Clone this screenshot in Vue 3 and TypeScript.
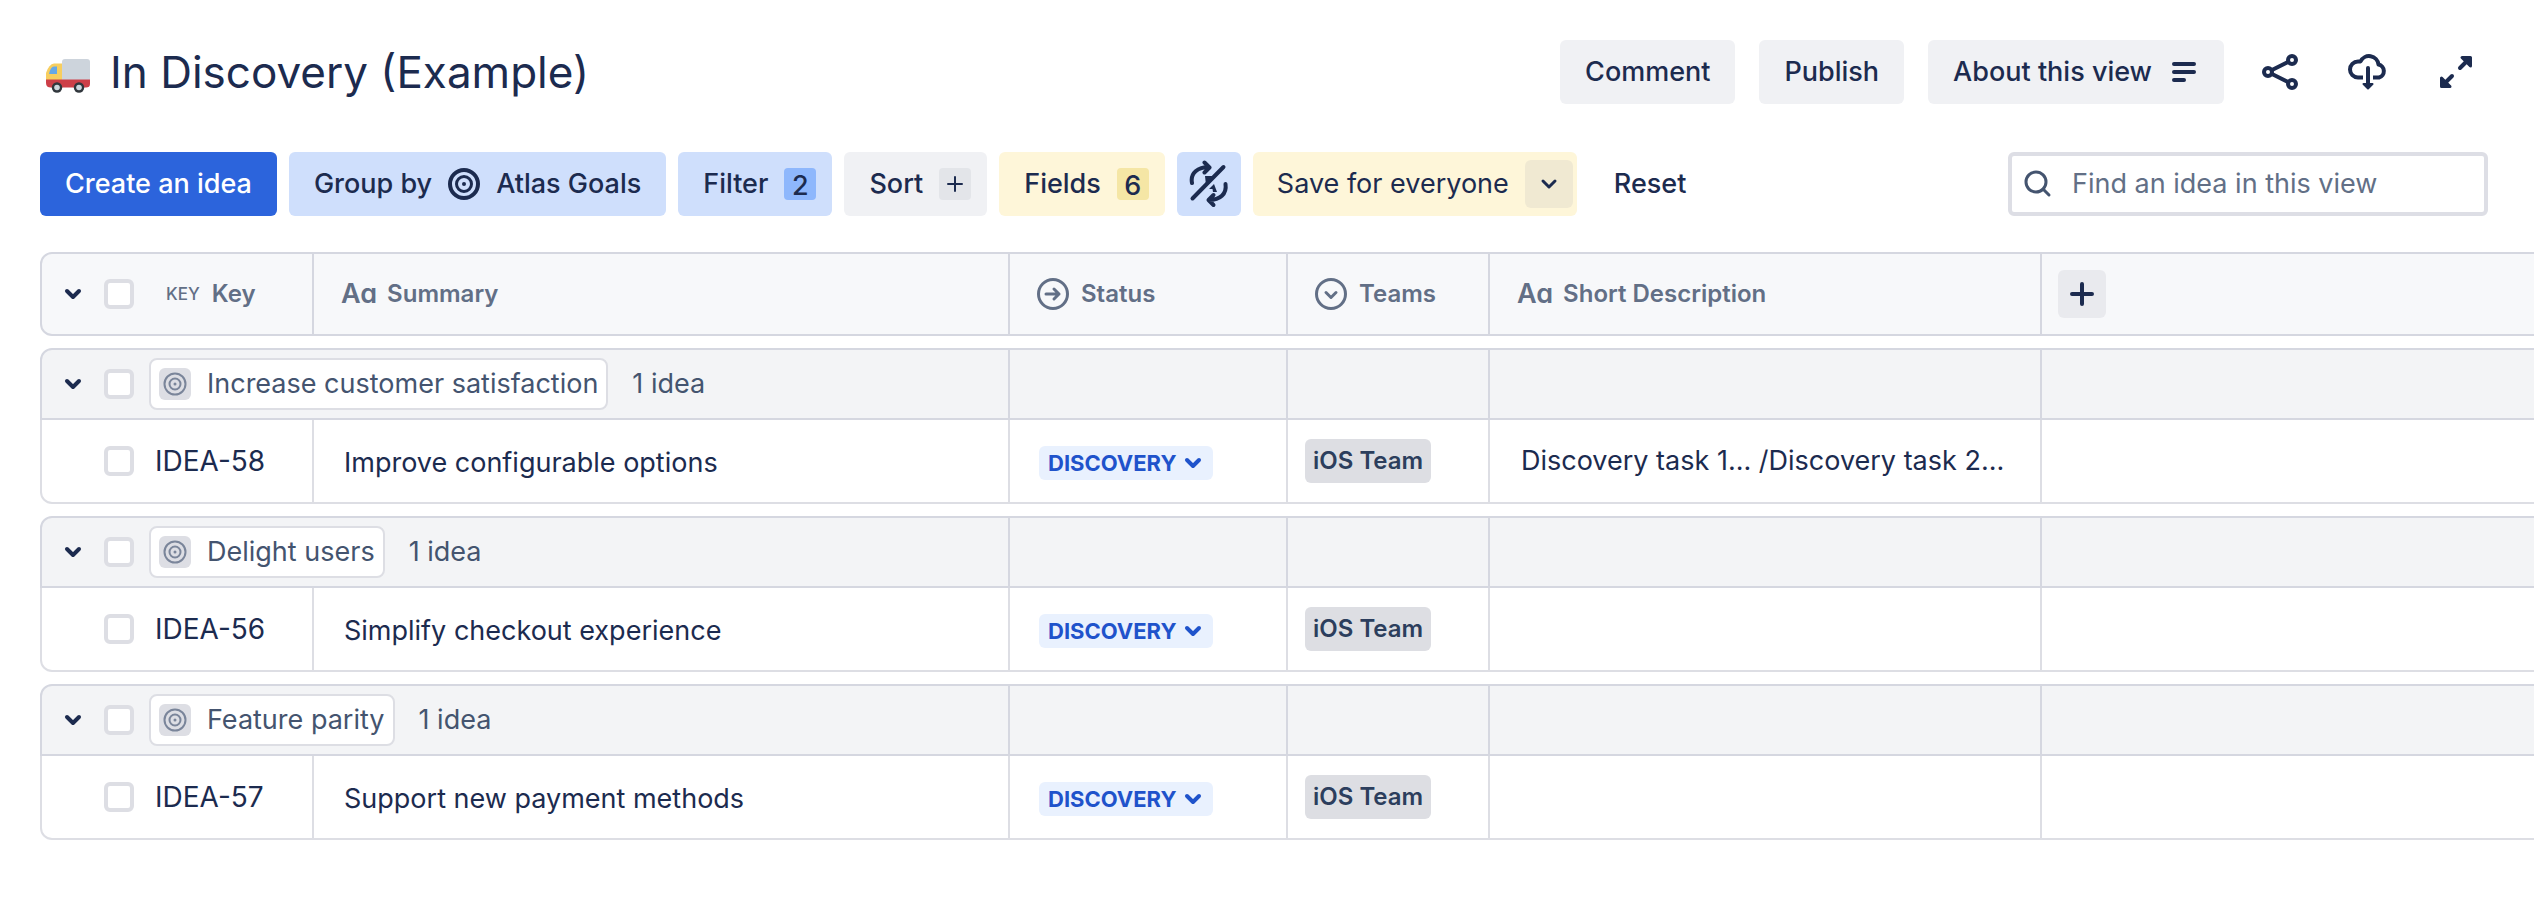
<script setup lang="ts">
interface Idea {
  key: string
  summary: string
  status: string
  team: string
  description: string
}
interface Group {
  name: string
  count: string
  ideas: Idea[]
}

const idea = (key: string, summary: string, description = ''): Idea => ({
  key,
  summary,
  status: 'DISCOVERY',
  team: 'iOS Team',
  description,
})

const groups: Group[] = [
  {
    name: 'Increase customer satisfaction',
    count: '1 idea',
    ideas: [idea('IDEA-58', 'Improve configurable options', 'Discovery task 1... /Discovery task 2...')],
  },
  { name: 'Delight users', count: '1 idea', ideas: [idea('IDEA-56', 'Simplify checkout experience')] },
  { name: 'Feature parity', count: '1 idea', ideas: [idea('IDEA-57', 'Support new payment methods')] },
]
</script>

<template>
  <main class="view">
    <header class="topbar">
      <svg class="truck" viewBox="0 0 44 34" aria-hidden="true">
        <path d="M0 21V14Q3 5 8 4.500H17V21Z" fill="#f7ce5f" />
        <path d="M3 15Q4.500 7.500 8 7.500H11V15Z" fill="#66a8e8" />
        <path d="M16 3Q16 0 19 0H41Q44 0 44 3V21H16Z" fill="#cdd4dc" />
        <path d="M0 20.500H44V25Q44 28.500 40 28.500H5Q0 28.500 0 24Z" fill="#cd3f48" />
        <circle cx="11" cy="28.500" r="5.200" fill="#31373d" />
        <circle cx="33" cy="28.500" r="5.200" fill="#31373d" />
        <circle cx="11" cy="28.500" r="2.800" fill="#ccd6dd" />
        <circle cx="33" cy="28.500" r="2.800" fill="#ccd6dd" />
      </svg>
      <h1>In Discovery (Example)</h1>
      <div class="actions">
        <button type="button" class="btn">Comment</button>
        <button type="button" class="btn">Publish</button>
        <button type="button" class="btn about">
          About this view
          <svg class="ic24" viewBox="0 0 24 24" aria-hidden="true"><path d="M2 4H22M2 12H22M2 20H12" class="st4" /></svg>
        </button>
        <button type="button" class="icon-btn" aria-label="Share">
          <svg viewBox="0 0 40 40" aria-hidden="true">
            <path d="M8 20L32 8M8 20L32 32" class="st4" />
            <g class="st4"><circle cx="8" cy="20" r="4" /><circle cx="32" cy="8" r="4" /><circle cx="32" cy="32" r="4" /></g>
          </svg>
        </button>
        <button type="button" class="icon-btn" aria-label="Export">
          <svg viewBox="0 0 40 40" aria-hidden="true">
            <path d="M15 25.500H10A8 8 0 0 1 10 9.500H12.500A9.500 9.500 0 0 1 30.500 12.500A6.700 6.700 0 0 1 31 25.500H25" class="st4 butt" />
            <path d="M20 16V33" class="st4" />
            <path d="M15.500 32H24.500L20 36.500Z" fill="currentColor" stroke="currentColor" stroke-width="2" stroke-linejoin="round" />
          </svg>
        </button>
        <button type="button" class="icon-btn" aria-label="Full screen">
          <svg viewBox="0 0 40 40" aria-hidden="true">
            <path d="M24 16L32 8M16 24L8 32" class="st4" />
            <path d="M26 5.500H34.500V14ZM5.500 26V34.500H14Z" fill="currentColor" stroke="currentColor" stroke-width="3" stroke-linejoin="round" />
          </svg>
        </button>
      </div>
    </header>

    <div class="toolbar">
      <button type="button" class="btn primary">Create an idea</button>
      <button type="button" class="btn blue groupby">
        Group by
        <svg class="ic32" viewBox="0 0 32 32" aria-hidden="true">
          <circle cx="16" cy="16" r="14" class="st4" /><circle cx="16" cy="16" r="7.500" class="st3" /><circle cx="16" cy="16" r="2" fill="currentColor" />
        </svg>
        <span>Atlas Goals</span>
      </button>
      <button type="button" class="btn blue">Filter <span class="badge badge-blue">2</span></button>
      <button type="button" class="btn">
        Sort
        <span class="badge badge-grey"><svg viewBox="0 0 16 16" aria-hidden="true"><path d="M8 1V15M1 8H15" class="st2" /></svg></span>
      </button>
      <button type="button" class="btn yellow">Fields <span class="badge badge-yellow">6</span></button>
      <button type="button" class="btn blue sync" aria-label="Autosave off">
        <svg viewBox="0 0 40 48" aria-hidden="true">
          <path d="M3 23C1 13 9 7 20 7M15.500 2.500L20.500 7.500L15.500 12.500" class="st4" />
          <path d="M36.500 24C38 34 31 40 20 40M24.500 35L19.500 40L24.500 45" class="st4" />
          <path d="M3.500 38.500L34.500 7" class="st4" />
          <path d="M16 16H25L17 25ZM20 29L25 24L28 32H24L23.500 29Z" fill="currentColor" />
        </svg>
      </button>
      <div class="split">
        <button type="button" class="save">Save for everyone</button>
        <button type="button" class="more" aria-label="More save options">
          <svg class="ic24" viewBox="0 0 24 24" aria-hidden="true"><path d="M6 9L12 15L18 9" class="st3" /></svg>
        </button>
      </div>
      <button type="button" class="btn reset">Reset</button>
      <label class="search">
        <svg viewBox="0 0 28 28" aria-hidden="true"><circle cx="12" cy="12" r="10" class="st3" /><path d="M19 19L25 25" class="st3" /></svg>
        <input type="text" placeholder="Find an idea in this view" aria-label="Find an idea in this view" />
      </label>
    </div>

    <table>
      <colgroup>
        <col class="c-key" /><col class="c-summary" /><col class="c-status" /><col class="c-teams" /><col class="c-desc" /><col />
      </colgroup>
      <thead>
        <tr>
          <th scope="col" class="first">
            <div class="cell lead">
              <button type="button" class="toggle" aria-label="Collapse all"><svg viewBox="0 0 24 24" aria-hidden="true"><path d="M6 9L12 15L18 9" class="st4" /></svg></button>
              <input type="checkbox" aria-label="Select all ideas" />
              <span class="key-mark">KEY</span><span>Key</span>
            </div>
          </th>
          <th scope="col"><div class="cell head"><span class="aa">Aa</span>Summary</div></th>
          <th scope="col">
            <div class="cell head">
              <svg class="ic32" viewBox="0 0 32 32" aria-hidden="true"><circle cx="16" cy="16" r="14.500" class="st3" /><path d="M9 16H22M17 11L22 16L17 21" class="st3" /></svg>
              Status
            </div>
          </th>
          <th scope="col">
            <div class="cell head">
              <svg class="ic32" viewBox="0 0 32 32" aria-hidden="true"><circle cx="16" cy="16" r="14.500" class="st3" /><path d="M11 14.500L16 19.500L21 14.500" class="st3" /></svg>
              Teams
            </div>
          </th>
          <th scope="col"><div class="cell head"><span class="aa">Aa</span>Short Description</div></th>
          <td class="add">
            <button type="button" aria-label="Add field"><svg class="ic24" viewBox="0 0 24 24" aria-hidden="true"><path d="M12 2V22M2 12H22" class="st4" /></svg></button>
          </td>
        </tr>
      </thead>
      <tbody v-for="group in groups" :key="group.name">
        <tr class="group">
          <th scope="rowgroup" colspan="2" class="first">
            <div class="cell lead">
              <button type="button" class="toggle" :aria-label="`Collapse ${group.name}`"><svg viewBox="0 0 24 24" aria-hidden="true"><path d="M6 9L12 15L18 9" class="st4" /></svg></button>
              <input type="checkbox" :aria-label="`Select ${group.name}`" />
              <span class="goal">
                <svg viewBox="0 0 32 32" aria-hidden="true">
                  <rect width="32" height="32" rx="6" fill="#dddee4" />
                  <g fill="none" stroke="#7a859a" stroke-width="2"><circle cx="16" cy="16" r="10.500" /><circle cx="16" cy="16" r="5.500" /></g>
                  <circle cx="16" cy="16" r="1.500" fill="#7a859a" />
                </svg>
                {{ group.name }}
              </span>
              <span class="count">{{ group.count }}</span>
            </div>
          </th>
          <td></td><td></td><td></td><td></td>
        </tr>
        <tr v-for="row in group.ideas" :key="row.key" class="idea">
          <td class="first">
            <div class="cell lead">
              <span class="toggle"></span>
              <input type="checkbox" :aria-label="`Select ${row.key}`" />
              <span class="key">{{ row.key }}</span>
            </div>
          </td>
          <td class="summary">{{ row.summary }}</td>
          <td class="status">
            <button type="button">{{ row.status }}<svg viewBox="0 0 20 20" aria-hidden="true"><path d="M4 7L10 13L16 7" class="st4" /></svg></button>
          </td>
          <td class="team"><span>{{ row.team }}</span></td>
          <td class="desc">{{ row.description }}</td>
          <td></td>
        </tr>
      </tbody>
    </table>
  </main>
</template>

<style>
body {
  margin: 0;
  background: #fff;
}
</style>

<style scoped>
.view {
  padding: 40px 0 80px 40px;
  color: #1c2b4f;
  font: 400 27px/36px Inter, "Liberation Sans", sans-serif;
}
button {
  border: 0;
  padding: 0;
  background: none;
  color: inherit;
  font: inherit;
  cursor: pointer;
}
svg {
  display: block;
  flex: none;
}
.st2, .st3, .st4 {
  fill: none;
  stroke: currentColor;
  stroke-linecap: round;
  stroke-linejoin: round;
}
.st2 { stroke-width: 2; }
.st3 { stroke-width: 3; }
.st4 { stroke-width: 4; }
.butt { stroke-linecap: butt; }
g.st4 { fill: #fff; }
.ic24 { width: 24px; height: 24px; }
.ic32 { width: 32px; height: 32px; }

.topbar {
  display: flex;
  align-items: center;
  height: 64px;
  padding: 0 46px 0 6px;
}
.truck {
  width: 44px;
  height: 34px;
  margin-top: 8px;
}
h1 {
  margin: 0 0 0 20px;
  font-size: 44px;
  line-height: 64px;
  font-weight: 400;
}
.actions {
  display: flex;
  gap: 24px;
  margin-left: auto;
}
.btn {
  display: flex;
  align-items: center;
  gap: 16px;
  height: 64px;
  padding: 0 25px;
  border-radius: 6px;
  background: #f0f1f4;
  font-weight: 500;
  white-space: nowrap;
}
.about { padding-right: 28px; gap: 20px; }
.icon-btn {
  display: grid;
  place-items: center;
  width: 64px;
  height: 64px;
}
.icon-btn svg { width: 40px; height: 40px; }

.toolbar {
  display: flex;
  gap: 12px;
  margin: 48px 46px 36px 0;
}
.primary { background: #2c64dc; color: #fff; }
.blue { background: #cfdffc; }
.yellow { background: #fef6d9; }
.badge {
  display: grid;
  place-items: center;
  width: 32px;
  height: 32px;
  border-radius: 4px;
}
.badge svg { width: 16px; height: 16px; }
.badge-blue { background: #8eb7fc; }
.badge-grey { background: #e3e5e9; }
.badge-yellow { background: #f5e6a5; }
.btn:has(.badge) { padding-right: 16px; }
.sync { padding: 0 12px; }
.sync svg { width: 40px; height: 48px; }
.split {
  display: flex;
  align-items: center;
  gap: 16px;
  height: 64px;
  padding: 0 4px 0 24px;
  border-radius: 6px;
  background: #fef6d9;
}
.save { white-space: nowrap; }
.more {
  display: grid;
  place-items: center;
  width: 48px;
  height: 48px;
  border-radius: 6px;
  background: #f0e9d2;
}
.reset { background: none; }
.search {
  display: flex;
  align-items: center;
  gap: 20px;
  box-sizing: border-box;
  width: 480px;
  height: 64px;
  margin-left: auto;
  padding: 0 12px;
  border: 4px solid #dddee5;
  border-radius: 6px;
  color: #44546f;
}
.search svg { width: 28px; height: 28px; }
.search input {
  flex: 1;
  min-width: 0;
  padding: 0;
  border: 0;
  outline: 0;
  background: none;
  color: #1c2b4f;
  font: inherit;
}
.search input::placeholder { color: #626f86; opacity: 1; }

table {
  width: 100%;
  table-layout: fixed;
  border-collapse: separate;
  border-spacing: 0;
}
.c-key { width: 274px; }
.c-summary { width: 696px; }
.c-status { width: 278px; }
.c-teams { width: 202px; }
.c-desc { width: 552px; }
th, td {
  box-sizing: border-box;
  padding: 0;
  border: solid #d5d7e0;
  border-width: 0 2px 2px 0;
  text-align: left;
  font-weight: 400;
  white-space: nowrap;
}
tr > :last-child { border-right: 0; }
.first { border-left-width: 2px; }
thead th, thead td {
  height: 84px;
  border-top-width: 2px;
  background: #f7f8fa;
  color: #626f86;
  font-size: 24px;
  font-weight: 600;
}
thead .first { border-radius: 12px 0 0 12px; }
tbody::before {
  content: "";
  display: block;
  height: 12px;
}
.group > * {
  height: 72px;
  border-top-width: 2px;
  background: #f3f4f6;
  color: #44546f;
}
.group .first { border-top-left-radius: 12px; }
.idea td { height: 84px; border-color: #dddee4; }
.idea .first { border-bottom-left-radius: 12px; }
.cell { display: flex; align-items: center; }
.head { gap: 12px; padding-left: 27px; }
.aa {
  margin-right: -2px;
  font-size: 27px;
  line-height: 32px;
  font-feature-settings: "cv11";
}
.key-mark { margin: 0 12px 0 11px; font-size: 17px; font-weight: 500; }
.key { font-size: 28px; }
.toggle {
  width: 24px;
  height: 24px;
  margin: 0 19px;
  color: #1c2b4f;
}
.toggle svg { width: 24px; height: 24px; }
input[type="checkbox"] {
  appearance: none;
  flex: none;
  box-sizing: border-box;
  width: 30px;
  height: 30px;
  margin: 0 21px 0 0;
  border: 4px solid #dddee4;
  border-radius: 6px;
  background: #fff;
}
.goal {
  display: flex;
  align-items: center;
  gap: 16px;
  box-sizing: border-box;
  height: 52px;
  margin-left: -6px;
  padding: 0 8px;
  border: 2px solid #dddee4;
  border-radius: 8px;
  background: #fff;
}
.goal svg { width: 32px; height: 32px; }
.count { margin-left: 24px; }
.summary { padding: 4px 0 0 30px; }
.status { padding: 4px 0 0 29px; }
.status button {
  display: flex;
  align-items: center;
  gap: 6px;
  height: 34px;
  padding: 0 10px 0 9px;
  border-radius: 6px;
  background: #e9f1fe;
  color: #1f53cb;
  font-size: 22px;
  font-weight: 700;
}
.status svg { width: 20px; height: 20px; }
.team { padding-left: 17px; }
.team span {
  display: inline-flex;
  align-items: center;
  height: 44px;
  padding: 0 8px;
  border-radius: 6px;
  background: #dddee3;
  color: #2c3e5d;
  font-size: 24px;
  font-weight: 600;
}
.desc { padding-left: 31px; }
.add { padding-left: 16px; }
.add button {
  display: grid;
  place-items: center;
  width: 48px;
  height: 48px;
  border-radius: 6px;
  background: #e9eaee;
  color: #1c2b4f;
}
</style>
